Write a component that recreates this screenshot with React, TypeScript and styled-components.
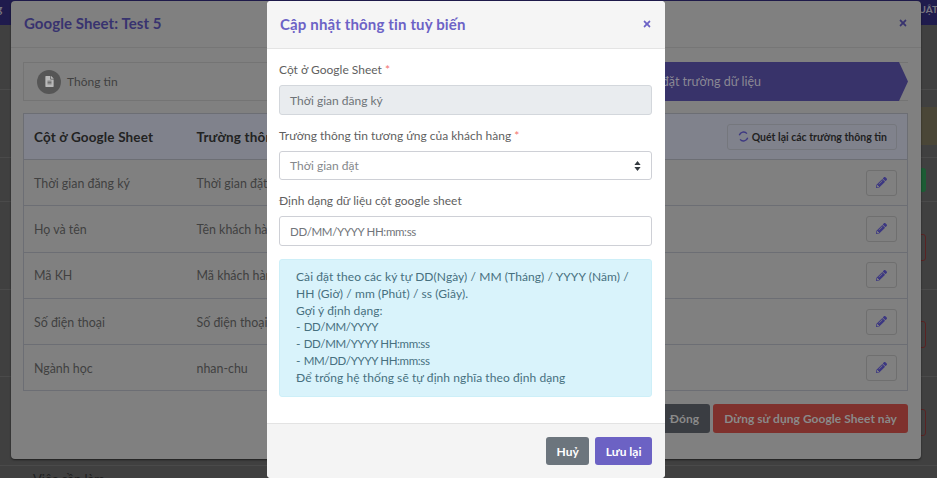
import React from "react";
import styled, { createGlobalStyle } from "styled-components";
import { FaFileAlt, FaPencilAlt, FaTimes } from "react-icons/fa";

const font = `"Lato", "Noto Sans", sans-serif`;

const Global = createGlobalStyle`
  html, body { margin: 0; padding: 0; width: 937px; height: 478px; overflow: hidden; background: #404040; }
  body { font-family: ${font}; font-size: 13px; }
  * { box-sizing: border-box; }
`;

const Page = styled.div`
  position: relative;
  width: 937px;
  height: 478px;
  overflow: hidden;
  background: #404040;
`;

const NavBar = styled.div`
  height: 25px;
  background: #1f1b4d;
  display: flex;
  justify-content: space-between;
  align-items: center;
  overflow: hidden;
  color: #77757f;
  font-size: 10px;
  font-weight: 700;
  padding-bottom: 8px;
`;
const NavLeft = styled.span`
  margin-left: -26px;
  font-size: 12px;
`;
const NavRight = styled.span`
  margin-right: -1px;
  white-space: nowrap;
`;

const BgRow = styled.div<{ $h: number; $pt?: number }>`
  height: ${(p) => p.$h}px;
  padding-top: ${(p) => p.$pt ?? 0}px;
  border-bottom: 1px solid #4a4a4a;
  display: flex;
  flex-direction: column;
  justify-content: center;
  align-items: flex-end;
  padding-right: 11px;
`;
const BgWarn = styled.div`
  height: 38px;
  width: 300px;
  margin-right: -11px;
  background: #4a4637;
`;
const BgGreen = styled.div`
  height: 24px;
  width: 60px;
  border-radius: 3px;
  background: #1c5c34;
`;
const BgOutline = styled.div`
  height: 27px;
  width: 60px;
  border-radius: 3px;
  border: 1px solid #5a2323;
`;
const BgText = styled.div`
  padding: 0 0 0 33px;
  font-size: 13px;
  line-height: 16px;
  color: #1e1e1e;
  margin-top: 5px;
`;

const OuterModal = styled.div`
  position: absolute;
  left: 11px;
  top: 1px;
  width: 910px;
  height: 458px;
  background: #808080;
  border-radius: 4px;
  box-shadow: 0 1px 2px rgba(0, 0, 0, 0.55);
`;
const OuterHeader = styled.div`
  height: 47px;
  padding: 0 13px 2px;
  display: flex;
  align-items: center;
  justify-content: space-between;
  border-bottom: 1px solid #767676;
`;
const OuterTitle = styled.div`
  font-size: 15px;
  font-weight: 700;
  letter-spacing: 0.07px;
  color: #38336f;
`;
const OuterClose = styled.div`
  color: #38336f;
  display: flex;
  font-size: 10px;
`;
const OuterBody = styled.div`
  padding: 14px 13px 0 12px;
`;

const Stepper = styled.div`
  display: flex;
  height: 39px;
  border: 1px solid #747474;
  border-right: 0;
`;
const StepInfo = styled.div`
  flex: 1;
  display: flex;
  align-items: center;
  gap: 6px;
  padding-left: 13px;
  font-size: 12px;
  color: #414141;
`;
const StepCircle = styled.div`
  width: 24px;
  height: 24px;
  border-radius: 50%;
  background: #565656;
  color: #b9b9b9;
  display: flex;
  align-items: center;
  justify-content: center;
  font-size: 11px;
`;
const StepActive = styled.div`
  width: 443px;
  margin: -1px 0;
  padding-left: 176px;
  background: #38336a;
  color: #8a8894;
  font-size: 12.5px;
  display: flex;
  align-items: center;
  clip-path: polygon(0 0, calc(100% - 9px) 0, 100% 50%, calc(100% - 9px) 100%, 0 100%);
`;

const Table = styled.table`
  width: 885px;
  margin-top: 12px;
  border-collapse: collapse;
  table-layout: fixed;
  border: 1px solid #6c6e74;
`;
const HeadRow = styled.tr`
  height: 46px;
  background: #80828c;
`;
const Row = styled.tr`
  height: 46.3px;
  border-top: 1px solid #6c6e74;
`;
const Th = styled.th<{ $w?: number }>`
  ${(p) => (p.$w ? `width: ${p.$w}px;` : "")}
  padding: 0 10px;
  text-align: left;
  font-size: 13.5px;
  font-weight: 700;
  letter-spacing: 0.15px;
  color: #222;
  white-space: nowrap;
  overflow: hidden;
`;
const Td = styled.td`
  padding: 1px 10px 0;
  font-size: 12.4px;
  color: #414141;
  white-space: nowrap;
  overflow: hidden;
`;
const ActionCell = styled.td`
  padding: 0 10px 0 0;
  text-align: right;
`;
const ActionHead = styled.th`
  padding: 0 10px 0 0;
  text-align: right;
`;
const RescanButton = styled.div`
  display: inline-flex;
  align-items: center;
  gap: 3px;
  height: 26px;
  padding: 0 9px 0 10px;
  border: 1px solid #75777d;
  border-radius: 3px;
  color: #1f1f1f;
  font-size: 10.5px;
  font-weight: 700;
  svg { color: #3c3782; }
`;
const EditButton = styled.div`
  display: inline-flex;
  align-items: center;
  justify-content: center;
  width: 31px;
  height: 26px;
  vertical-align: middle;
  border: 1px solid #6f6f6f;
  border-radius: 3px;
  color: #3c3782;
  font-size: 11px;
`;

const OuterActions = styled.div`
  display: flex;
  justify-content: flex-end;
  gap: 3px;
  margin-top: 13px;
`;
const OuterButton = styled.div<{ $bg: string }>`
  height: 29px;
  padding: 0 11px;
  display: flex;
  align-items: center;
  border-radius: 3px;
  background: ${(p) => p.$bg};
  color: #8a8a8a;
  font-size: 12px;
  font-weight: 700;
  letter-spacing: 0.04px;
`;

const InnerModal = styled.div`
  position: absolute;
  left: 267px;
  top: 1px;
  width: 398px;
  height: 477px;
  display: flex;
  flex-direction: column;
  background: #fff;
  border-radius: 4px;
  overflow: hidden;
`;
const InnerHeader = styled.div`
  height: 48px;
  flex: none;
  padding: 0 13px 2px;
  display: flex;
  align-items: center;
  justify-content: space-between;
  background: #f5f5f5;
  border-bottom: 1px solid #e4e4e4;
`;
const InnerTitle = styled.div`
  font-size: 15px;
  font-weight: 700;
  letter-spacing: 0.15px;
  color: #6c62c6;
`;
const InnerClose = styled.div`
  color: #6c62c6;
  display: flex;
  font-size: 10px;
`;
const InnerBody = styled.div`
  flex: 1;
  padding: 12px 13px 0 12px;
`;
const Group = styled.div`
  margin-bottom: 12px;
`;
const Label = styled.div`
  height: 18px;
  line-height: 18px;
  margin-bottom: 6px;
  font-size: 12px;
  color: #5f5f5f;
`;
const Star = styled.span`
  color: #f4736f;
`;
const Field = styled.div<{ $disabled?: boolean; $h?: number }>`
  height: ${(p) => p.$h ?? 30}px;
  padding: 0 10px;
  display: flex;
  align-items: center;
  justify-content: space-between;
  border: 1px solid ${(p) => (p.$disabled ? "#d3d7dc" : "#ced0d6")};
  border-radius: 3px;
  background: ${(p) => (p.$disabled ? "#e9ecef" : "#fff")};
  color: ${(p) => (p.$disabled ? "#6e7378" : "#71757a")};
  font-size: 12px;
`;
const SelectValue = styled.span`
  color: #85888c;
`;
const DateFormat = styled.span`
  font-size: 11.5px;
  letter-spacing: -0.35px;
`;
const Alert = styled.div`
  height: 138px;
  margin-top: 13px;
  padding: 9px 16px;
  border: 1px solid #cdeff8;
  border-radius: 3px;
  background: #d9f3fb;
  color: #47707f;
  font-size: 12px;
  line-height: 16.8px;
  letter-spacing: 0.08px;
`;
const InnerFooter = styled.div`
  height: 55px;
  flex: none;
  padding: 13px 13px 0 0;
  display: flex;
  justify-content: flex-end;
  gap: 6px;
  background: #f4f4f4;
  border-top: 1px solid #e3e3e3;
`;
const InnerButton = styled.div<{ $bg: string }>`
  height: 28px;
  padding: 0 10.5px;
  display: flex;
  align-items: center;
  border-radius: 3px;
  background: ${(p) => p.$bg};
  color: #fff;
  font-size: 12px;
  font-weight: 700;
`;

const rows = [
  ["Thời gian đăng ký", "Thời gian đặt"],
  ["Họ và tên", "Tên khách hàng"],
  ["Mã KH", "Mã khách hàng"],
  ["Số điện thoại", "Số điện thoại"],
  ["Ngành học", "nhan-chu"],
];

const SortArrows = () => (
  <svg width="7" height="10" viewBox="0 0 7 10" fill="#343a40">
    <path d="M3.5 0 L6.6 4 H0.4 Z M3.5 10 L0.4 6 H6.6 Z" />
  </svg>
);

const RingIcon = () => (
  <svg width="11" height="11" viewBox="0 0 11 11" fill="none" stroke="currentColor" strokeWidth="1.4">
    <path d="M8.9 2.6A4.4 4.4 0 0 0 1.3 4.2" />
    <path d="M2.1 8.4A4.4 4.4 0 0 0 9.7 6.8" />
  </svg>
);

export default function App() {
  return (
    <Page>
      <Global />
      <NavBar>
        <NavLeft>Đăng</NavLeft>
        <NavRight>PHÁP LUẬT</NavRight>
      </NavBar>
      <BgRow $h={65} />
      <BgRow $h={68} $pt={4}>
        <BgWarn />
      </BgRow>
      <BgRow $h={44}>
        <BgGreen />
      </BgRow>
      <BgRow $h={88} $pt={3}>
        <BgOutline />
      </BgRow>
      <BgRow $h={87} $pt={3}>
        <BgOutline />
      </BgRow>
      <BgRow $h={89} $pt={3}>
        <BgOutline />
      </BgRow>
      <BgText>Việc cần làm</BgText>

      <OuterModal>
        <OuterHeader>
          <OuterTitle>Google Sheet: Test 5</OuterTitle>
          <OuterClose>
            <FaTimes />
          </OuterClose>
        </OuterHeader>
        <OuterBody>
          <Stepper>
            <StepInfo>
              <StepCircle>
                <FaFileAlt />
              </StepCircle>
              Thông tin
            </StepInfo>
            <StepActive>Cài đặt trường dữ liệu</StepActive>
          </Stepper>
          <Table>
            <thead>
              <HeadRow>
                <Th $w={163}>Cột ở Google Sheet</Th>
                <Th $w={300}>Trường thông tin</Th>
                <ActionHead>
                  <RescanButton>
                    <RingIcon />
                    Quét lại các trường thông tin
                  </RescanButton>
                </ActionHead>
              </HeadRow>
            </thead>
            <tbody>
              {rows.map(([a, b]) => (
                <Row key={a}>
                  <Td>{a}</Td>
                  <Td>{b}</Td>
                  <ActionCell>
                    <EditButton>
                      <FaPencilAlt />
                    </EditButton>
                  </ActionCell>
                </Row>
              ))}
            </tbody>
          </Table>
          <OuterActions>
            <OuterButton $bg="#3a3d42">Đóng</OuterButton>
            <OuterButton $bg="#7f312d">Dừng sử dụng Google Sheet này</OuterButton>
          </OuterActions>
        </OuterBody>
      </OuterModal>

      <InnerModal>
        <InnerHeader>
          <InnerTitle>Cập nhật thông tin tuỳ biến</InnerTitle>
          <InnerClose>
            <FaTimes />
          </InnerClose>
        </InnerHeader>
        <InnerBody>
          <Group>
            <Label>
              Cột ở Google Sheet <Star>*</Star>
            </Label>
            <Field $disabled>Thời gian đăng ký</Field>
          </Group>
          <Group>
            <Label>
              Trường thông tin tương ứng của khách hàng <Star>*</Star>
            </Label>
            <Field $h={29}>
              <SelectValue>Thời gian đặt</SelectValue>
              <SortArrows />
            </Field>
          </Group>
          <Group>
            <Label>Định dạng dữ liệu cột google sheet</Label>
            <Field>
              <DateFormat>DD/MM/YYYY HH:mm:ss</DateFormat>
            </Field>
          </Group>
          <Alert>
            Cài đặt theo các ký tự DD(Ngày) / MM (Tháng) / YYYY (Năm) /
            <br />
            HH (Giờ) / mm (Phút) / ss (Giây).
            <br />
            Gợi ý định dạng:
            <br />- <DateFormat>DD/MM/YYYY</DateFormat>
            <br />- <DateFormat>DD/MM/YYYY HH:mm:ss</DateFormat>
            <br />- <DateFormat>MM/DD/YYYY HH:mm:ss</DateFormat>
            <br />
            Để trống hệ thống sẽ tự định nghĩa theo định dạng
          </Alert>
        </InnerBody>
        <InnerFooter>
          <InnerButton $bg="#6c757d">Huỷ</InnerButton>
          <InnerButton $bg="#6c62c4">Lưu lại</InnerButton>
        </InnerFooter>
      </InnerModal>
    </Page>
  );
}
